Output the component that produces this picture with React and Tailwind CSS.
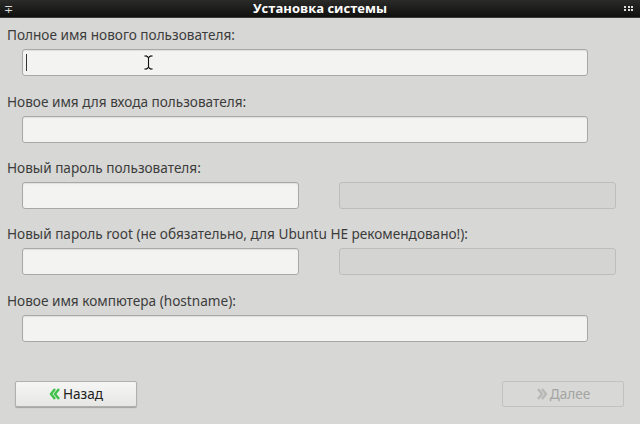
import React from 'react'

function Field({ disabled, className = '', children }) {
  return (
    <div
      className={`h-[27px] rounded-[3px] border ${
        disabled
          ? 'bg-[#d4d4d2] border-[#bdbdbb]'
          : 'bg-[#f3f3f2] border-[#a8a8a6] shadow-[inset_0_1px_1px_rgba(0,0,0,0.08)]'
      } ${className}`}
    >
      {children}
    </div>
  )
}

function Label({ children }) {
  return <div className="pl-[7px] h-[20px] leading-[20px] text-[13.6px] text-[#3c3c3c]">{children}</div>
}

function Chevrons({ dir, color }) {
  const pts = dir === 'left'
    ? ['M6 1 L2 6 L6 11', 'M10 1 L6 6 L10 11']
    : ['M2 1 L6 6 L2 11', 'M6 1 L10 6 L6 11']
  return (
    <svg width="12" height="12" viewBox="0 0 12 12">
      {pts.map(d => (
        <path key={d} d={d} fill="none" stroke={color} strokeWidth="2.4" strokeLinejoin="miter" />
      ))}
    </svg>
  )
}

export default function App() {
  return (
    <div className="w-[640px] h-[424px] bg-[#d7d7d5] flex flex-col overflow-hidden" style={{ fontFamily: '"Noto Sans", "DejaVu Sans", sans-serif' }}>
      {/* заголовок окна */}
      <div className="h-[18px] bg-gradient-to-b from-[#2b2b29] to-[#10100f] border-b border-[#3a3a38] flex items-center px-[4px] text-white">
        <span className="w-[12px] text-[11px] leading-none text-[#ddd]">∓</span>
        <span className="flex-1 text-center text-[13px] font-bold leading-none" style={{ fontFamily: '"Open Sans", "DejaVu Sans", sans-serif' }}>
          Установка системы
        </span>
        <span className="w-[12px] grid grid-cols-3 gap-[1px] pr-[2px]">
          {[0, 1, 2, 3, 4, 5].map(i => <span key={i} className="w-[2px] h-[2px] bg-[#ddd]" />)}
        </span>
      </div>

      <div className="flex flex-col pt-[7px]">
        <Label>Полное имя нового пользователя:</Label>
        <div className="pl-[22px] pr-[52px] pt-[4px]">
          <Field className="relative">
            <span className="absolute left-[3px] top-[4px] w-px h-[17px] bg-[#333]" />
            <svg className="absolute left-[120px] top-[4px]" width="11" height="17" viewBox="0 0 11 17">
              <path d="M1 1 H4 L5.5 2.5 L7 1 H10 V3 H7.5 L6.5 4 V13 L7.5 14 H10 V16 H7 L5.5 14.5 L4 16 H1 V14 H3.5 L4.5 13 V4 L3.5 3 H1 Z" fill="#111" stroke="#fff" strokeWidth="0.8" />
            </svg>
          </Field>
        </div>

        <div className="h-[16px]" />
        <Label>Новое имя для входа пользователя:</Label>
        <div className="pl-[22px] pr-[52px] pt-[4px]">
          <Field />
        </div>

        <div className="h-[15px]" />
        <Label>Новый пароль пользователя:</Label>
        <div className="pl-[22px] pr-[24px] pt-[4px] grid grid-cols-2 gap-[40px]">
          <Field />
          <Field disabled />
        </div>

        <div className="h-[15px]" />
        <Label>Новый пароль root (не обязательно, для Ubuntu НЕ рекомендовано!):</Label>
        <div className="pl-[22px] pr-[24px] pt-[4px] grid grid-cols-2 gap-[40px]">
          <Field />
          <Field disabled />
        </div>

        <div className="h-[16px]" />
        <Label>Новое имя компютера (hostname):</Label>
        <div className="pl-[22px] pr-[52px] pt-[4px]">
          <Field />
        </div>
      </div>

      <div className="mt-[39px] flex justify-between pl-[15px] pr-[16px]">
        <button className="w-[122px] h-[26px] rounded-[2px] border border-[#b0b0ae] bg-gradient-to-b from-[#f6f6f5] to-[#e6e6e4] shadow-[0_1px_1px_rgba(0,0,0,0.25)] flex items-center justify-center gap-[2px] text-[13.6px] text-[#222]">
          <Chevrons dir="left" color="#3fc24a" />
          <span>Назад</span>
        </button>
        <button className="w-[122px] h-[26px] rounded-[2px] border border-[#c2c2c0] bg-[#d8d8d6] flex items-center justify-center gap-[2px] text-[13.6px] text-[#a4a4a2]">
          <Chevrons dir="right" color="#b8b8b6" />
          <span>Далее</span>
        </button>
      </div>
    </div>
  )
}
